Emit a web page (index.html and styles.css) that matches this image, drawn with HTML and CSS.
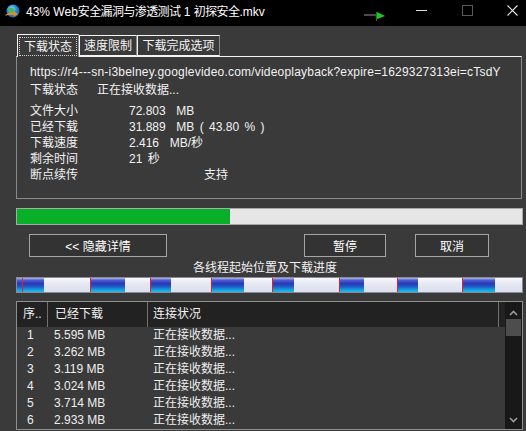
FILE: index.html
```html
<!DOCTYPE html>
<html>
<head>
<meta charset="utf-8">
<link rel="stylesheet" href="styles.css">
</head>
<body>
<div class="window">
  <div class="titlebar">
    <svg class="appicon" width="16" height="16" viewBox="0 0 16 16">
      <defs>
        <radialGradient id="gl" cx="0.4" cy="0.35" r="0.7">
          <stop offset="0" stop-color="#9fe3ff"/>
          <stop offset="0.5" stop-color="#2a8ad8"/>
          <stop offset="1" stop-color="#145aa8"/>
        </radialGradient>
      </defs>
      <circle cx="9" cy="7" r="6.5" fill="url(#gl)"/>
      <path d="M5 4 Q8 3 10 5 Q9 8 12 10 Q9 11 7 9 Q5 7 5 4Z" fill="#3fbf3f"/>
      <path d="M1 12 Q4 7 10 9 L9 7 L14 10 L9 13 L10 11 Q5 10 1 12Z" fill="#f08a1c"/>
    </svg>
    <span class="title">43% Web<span class="cjk">安全漏洞与渗透测试</span> 1 <span class="cjk">初探安全</span>.mkv</span>
    <span class="spacer"></span>
    <svg class="flag" width="22" height="10" viewBox="0 0 22 10">
      <rect x="0" y="3" width="13" height="2" fill="#4a4a4a"/>
      <rect x="12" y="1" width="1" height="9" fill="#1a7a1a"/>
      <path d="M13 1 L21 5 L13 8Z" fill="#22c822"/>
    </svg>
    <span class="wbtn"><svg width="11" height="11" viewBox="0 0 11 11"><rect x="0" y="5" width="11" height="1" fill="#ddd"/></svg></span>
    <span class="wbtn"><svg width="11" height="11" viewBox="0 0 11 11"><rect x="0.5" y="0.5" width="10" height="10" fill="none" stroke="#5a5a5a"/></svg></span>
    <span class="wbtn close"><svg width="11" height="11" viewBox="0 0 11 11"><path d="M0.5 0.5 L10.5 10.5 M10.5 0.5 L0.5 10.5" stroke="#e8e8e8" stroke-width="1.1"/></svg></span>
  </div>

  <div class="main">
    <div class="tabs">
      <div class="tab active"><span class="focus">下载状态</span></div>
      <div class="tab t2">速度限制</div>
      <div class="tab t3">下载完成选项</div>
      <div class="tabfill"></div>
    </div>
    <div class="panel">
      <div class="url">https://r4---sn-i3belney.googlevideo.com/videoplayback?expire=1629327313ei=cTsdY</div>
      <div class="status"><span class="slabel">下载状态</span><span>正在接收数据...</span></div>
      <div class="info">
        <div class="row"><span class="label">文件大小</span><span class="val">72.803  MB</span></div>
        <div class="row"><span class="label">已经下载</span><span class="val">31.889  MB ( 43.80 % )</span></div>
        <div class="row"><span class="label">下载速度</span><span class="val">2.416  MB/秒</span></div>
        <div class="row"><span class="label">剩余时间</span><span class="val">21 秒</span></div>
        <div class="row"><span class="label">断点续传</span><span class="val support">支持</span></div>
      </div>
    </div>

    <div class="progress"><div class="fill" style="width:42.1%"></div></div>

    <div class="buttons">
      <div class="btn b1">&lt;&lt; 隐藏详情</div>
      <div class="btn b2">暂停</div>
      <div class="btn b3">取消</div>
    </div>

    <div class="caption">各线程起始位置及下载进度</div>

    <div class="segbar">
      <div class="done" style="width:5px"></div>
      <div class="seg" style="width:68px"><div class="done" style="width:21px"></div></div>
      <div class="seg" style="width:60px"><div class="done" style="width:34px"></div></div>
      <div class="seg" style="width:61px"><div class="done" style="width:20px"></div></div>
      <div class="seg" style="width:61px"><div class="done" style="width:32px"></div></div>
      <div class="seg" style="width:67px"><div class="done" style="width:21px"></div></div>
      <div class="seg" style="width:58px"><div class="done" style="width:24px"></div></div>
      <div class="seg" style="width:65px"><div class="done" style="width:20px"></div></div>
      <div class="seg last"><div class="done" style="width:32px"></div></div>
    </div>

    <div class="list">
      <div class="listmain">
        <div class="lhead">
          <div class="c1 hc">序..</div>
          <div class="c2 hc">已经下载</div>
          <div class="c3 hc">连接状况</div>
        </div>
        <div class="lrow"><div class="c1">1</div><div class="c2">5.595 MB</div><div class="c3">正在接收数据...</div></div>
        <div class="lrow"><div class="c1">2</div><div class="c2">3.262 MB</div><div class="c3">正在接收数据...</div></div>
        <div class="lrow"><div class="c1">3</div><div class="c2">3.119 MB</div><div class="c3">正在接收数据...</div></div>
        <div class="lrow"><div class="c1">4</div><div class="c2">3.024 MB</div><div class="c3">正在接收数据...</div></div>
        <div class="lrow"><div class="c1">5</div><div class="c2">3.714 MB</div><div class="c3">正在接收数据...</div></div>
        <div class="lrow"><div class="c1">6</div><div class="c2">2.933 MB</div><div class="c3">正在接收数据...</div></div>
      </div>
      <div class="scrollbar">
        <svg class="arrow up" width="9" height="6" viewBox="0 0 9 6"><path d="M1 5 L4.5 1.5 L8 5" fill="none" stroke="#9a9a9a" stroke-width="1.6"/></svg>
        <div class="thumb"></div>
        <span class="spacer"></span>
        <svg class="arrow down" width="9" height="6" viewBox="0 0 9 6"><path d="M1 1 L4.5 4.5 L8 1" fill="none" stroke="#9a9a9a" stroke-width="1.6"/></svg>
      </div>
    </div>
  </div>
</div>
</body>
</html>
```

FILE: styles.css
```css
* { box-sizing: border-box; }
html, body {
  margin: 0;
  padding: 0;
  background: #3a3a3a;
}
body {
  width: 526px;
  height: 431px;
  overflow: hidden;
  font-family: "Liberation Sans", "Noto Sans CJK SC", sans-serif;
  font-size: 12px;
  color: #f2f2f2;
}
.window {
  width: 526px;
  height: 431px;
  display: flex;
  flex-direction: column;
}
.titlebar {
  height: 26px;
  background: #000;
  display: flex;
  align-items: center;
  flex-shrink: 0;
}
.appicon { margin-left: 4px; margin-top: -3px; }
.title {
  margin-left: 6px;
  font-size: 12px;
  line-height: 16px;
  color: #fff;
  margin-top: -2px;
  white-space: pre;
}
.title .cjk { letter-spacing: -0.6px; }
.spacer { flex: 1; }
.flag { margin-right: 12px; margin-top: 6px; }
.wbtn {
  width: 46px;
  height: 26px;
  display: flex;
  align-items: flex-start;
  justify-content: center;
  padding-top: 5px;
}
.wbtn.close { width: 36px; justify-content: flex-start; padding-left: 17px; }

.main {
  padding: 0 4px 0 16px;
  display: flex;
  flex-direction: column;
  flex: 1;
}
.tabs {
  display: flex;
  align-items: flex-end;
  height: 30px;
  padding-left: 1px;
}
.tab {
  height: 20px;
  border: 1px solid #f4f4f4;
  border-right-color: #8a8a8a;
  border-bottom: none;
  display: flex;
  align-items: center;
  justify-content: center;
  line-height: 14px;
  color: #f4f4f4;
  position: relative;
  top: 1px;
}
.tab.active {
  width: 62px;
  height: 23px;
  background: #3a3a3a;
  z-index: 1;
  padding: 1px 1px 0 1px;
}
.focus {
  border: 1px dotted #cfcfcf;
  width: 100%;
  height: 19px;
  display: flex;
  align-items: center;
  justify-content: center;
}
.t2 { width: 58px; border-bottom: 1px solid #f4f4f4; }
.t3 { width: 83px; border-bottom: 1px solid #f4f4f4; }
.tab.t2, .tab.t3 { height: 21px; top: 0; }
.tabfill { flex: 1; }

.panel {
  height: 143px;
  border: 1px solid #8a8a8a;
  border-top-color: #f4f4f4;
  padding: 7px 0 0 13px;
  line-height: 16px;
}
.url { height: 18px; letter-spacing: 0.2px; }
.status { height: 21px; display: flex; }
.slabel { width: 67px; }
.row { display: flex; height: 16px; }
.label { width: 99px; }
.val { white-space: pre; word-spacing: 2px; }
.support { margin-left: 75px; }

.progress {
  margin-top: 9px;
  height: 17px;
  border: 1px solid #a8a8a8;
  background: #e6e6e6;
  width: 507px;
}
.fill { height: 100%; background: #08b02a; }

.buttons {
  display: flex;
  margin-top: 9px;
  height: 23px;
}
.btn {
  height: 23px;
  border: 1px solid #a4a4a4;
  background: #333;
  display: flex;
  align-items: center;
  justify-content: center;
  color: #fff;
}
.b1 { width: 138px; margin-left: 13px; }
.b2 { width: 82px; margin-left: 137px; }
.b3 { width: 74px; margin-left: 29px; }

.caption {
  text-align: center;
  height: 18px;
  line-height: 18px;
  margin-top: 2px;
  padding-right: 8px;
}
.segbar {
  height: 16px;
  border: 1px solid #8a8a96;
  display: flex;
  width: 507px;
  background: linear-gradient(#f8f8fc, #e6e8f2 40%, #dcdfee);
}
.seg {
  height: 100%;
  border-left: 1px solid #e82020;
  flex-shrink: 0;
}
.seg.last { flex: 1; }
.done {
  height: 100%;
  flex-shrink: 0;
  background: linear-gradient(#b0b8f0 0%, #5060d0 15%, #2a38b8 40%, #1f5cc8 62%, #1a98dc 82%, #18c0e6 100%);
}

.list {
  margin-top: 8px;
  height: 129px;
  width: 507px;
  border: 1px solid #8e8e8e;
  display: flex;
}
.listmain { flex: 1; overflow: hidden; }
.lhead {
  height: 25px;
  background: #222;
  display: flex;
  align-items: center;
}
.hc { height: 25px; line-height: 25px; border-right: 1px solid #707070; }
.c1 { width: 31px; padding-left: 10px; flex-shrink: 0; }
.c2 { width: 100px; padding-left: 6px; flex-shrink: 0; }
.c3 { width: 351px; padding-left: 5px; flex-shrink: 0; }
.lhead .c1 { padding-left: 6px; }
.lhead .c2 { padding-left: 7px; }
.lrow {
  height: 17px;
  line-height: 17px;
  display: flex;
  color: #eee;
}
.scrollbar {
  width: 17px;
  background: #181818;
  display: flex;
  flex-direction: column;
  align-items: center;
}
.arrow.up { margin-top: 8px; }
.thumb {
  width: 15px;
  height: 17px;
  background: #4d4d4d;
  margin-top: 3px;
}
.arrow.down { margin-bottom: 6px; }
```
